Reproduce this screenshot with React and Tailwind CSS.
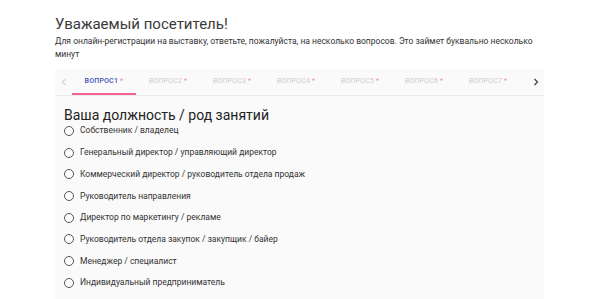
import React from 'react';

const tabs = ['Вопрос1', 'Вопрос2', 'Вопрос3', 'Вопрос4', 'Вопрос5', 'Вопрос6', 'Вопрос7'];

const options = [
  'Собственник / владелец',
  'Генеральный директор / управляющий директор',
  'Коммерческий директор / руководитель отдела продаж',
  'Руководитель направления',
  'Директор по маркетингу / рекламе',
  'Руководитель отдела закупок / закупщик / байер',
  'Менеджер / специалист',
  'Индивидуальный предприниматель',
  'Другое',
];

export default function App() {
  return (
    <div className="w-[600px] h-[299px] overflow-hidden bg-white font-['Roboto',sans-serif] text-[#333]">
      {/* Header */}
      <div className="pl-[55px] pt-[14px]">
        <h1 className="text-[15px] leading-[20px] text-[#3a3a3a]">Уважаемый посетитель!</h1>
        <p className="w-[490px] text-[8.5px] leading-[13px] mt-[1px] text-[#333]">
          Для онлайн-регистрации на выставку, ответьте, пожалуйста, на несколько вопросов. Это займет буквально несколько минут
        </p>
      </div>

      {/* Panel */}
      <div className="ml-[55px] mt-[8px] w-[489px] bg-[#fafafa]">
        <div className="flex items-stretch h-[27px] border-b border-[#ececec]">
          <div className="w-[17px] flex items-center justify-center text-[#d5d5d5]">
            <svg width="6" height="8" viewBox="0 0 6 8" fill="none" stroke="currentColor" strokeWidth="1.2">
              <path d="M4.5 1 L1.5 4 L4.5 7" />
            </svg>
          </div>
          {tabs.map((t, i) => (
            <div
              key={t}
              className={
                'w-[64px] flex items-center justify-center text-[7px] uppercase tracking-[0.2px] border-b-2 ' +
                (i === 0 ? 'border-[#f06292] text-[#3f51b5] font-medium' : 'border-transparent text-[#cacaca]')
              }
            >
              <span>{t}</span>
              <span className="ml-[2px] text-[#f48fb1]">*</span>
            </div>
          ))}
          <div className="flex-1 flex items-center justify-center pl-[8px] text-[#444]">
            <svg width="6" height="8" viewBox="0 0 6 8" fill="none" stroke="currentColor" strokeWidth="1.3">
              <path d="M1.5 1 L4.5 4 L1.5 7" />
            </svg>
          </div>
        </div>

        <div className="pl-[9px] pt-[10px]">
          <h2 className="text-[14px] leading-[18px] text-[#222]">Ваша должность / род занятий</h2>
          <div className="flex flex-col mt-[-4px]">
            {options.map((o) => (
              <label key={o} className="flex items-center h-[21.7px] gap-[6px]">
                <span className="w-[10px] h-[10px] rounded-full border-[1.3px] border-[#555] bg-white shrink-0" />
                <span className="text-[8.5px] text-[#333]">{o}</span>
              </label>
            ))}
          </div>
        </div>
      </div>
    </div>
  );
}
